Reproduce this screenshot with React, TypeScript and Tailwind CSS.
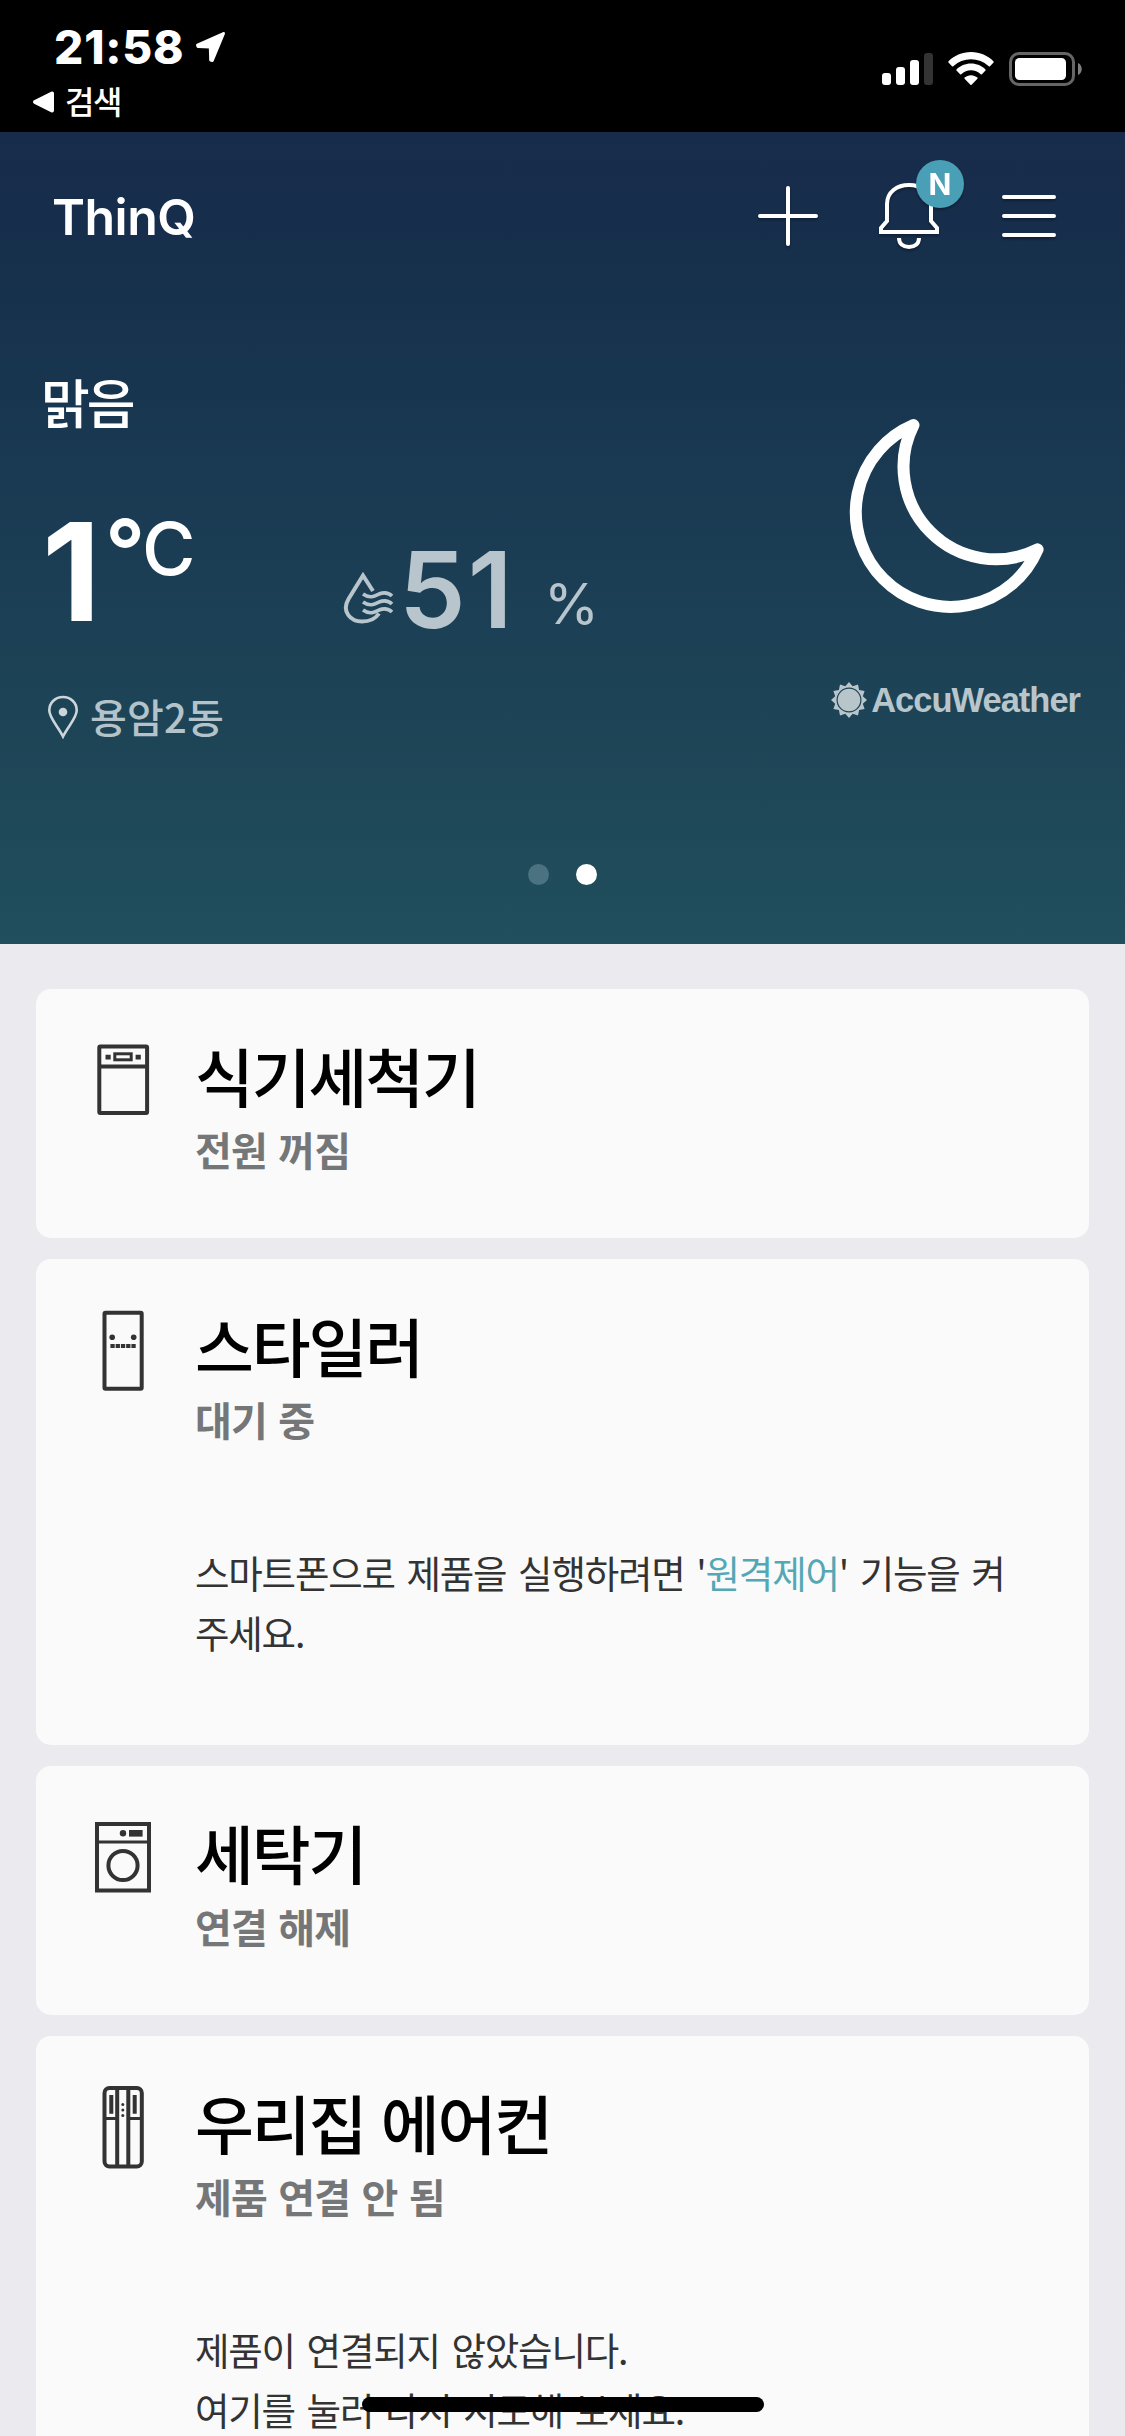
import type { ReactNode } from "react";

function StatusBar() {
  return (
    <div className="flex h-[132px] shrink-0 justify-between bg-black text-white">
      <div className="flex flex-col pl-8">
        <div className="mt-[20px] flex h-[54px] items-center pl-[22px]">
          <span className="w-[130px] font-[Inter] text-[46px] leading-[54px] font-extrabold tracking-[0.8px] whitespace-nowrap">21:58</span>
          <svg className="ml-[11px]" width="31" height="32" viewBox="0 0 31 32" fill="#fff" stroke="#fff" strokeWidth="3" strokeLinejoin="round">
            <path d="M28.5 2.5 L2.5 14 L3 15.5 L15.3 16 L15.7 29 L17.3 29.5 Z" />
          </svg>
        </div>
        <div className="mt-[7px] flex h-[42px] items-center">
          <svg width="23" height="24" viewBox="0 0 23 24" fill="#fff" stroke="#fff" strokeWidth="4" strokeLinejoin="round">
            <path d="M3 12 L20 3.5 V20.5 Z" />
          </svg>
          <span className="-mt-[4px] ml-[10px] text-[32px] leading-[42px] font-medium tracking-[-1.5px]">검색</span>
        </div>
      </div>
      <div className="mt-[50px] flex h-[38px] items-center pr-[42px]">
        <div className="flex h-8 items-end gap-[5px]">
          <i className="h-[12px] w-[9px] rounded-[3px] bg-white" />
          <i className="h-[18px] w-[9px] rounded-[3px] bg-white" />
          <i className="h-[25px] w-[9px] rounded-[3px] bg-white" />
          <i className="h-[32px] w-[9px] rounded-[3px] bg-[#333]" />
        </div>
        <svg className="ml-[15px]" width="46" height="34" viewBox="0 0 46 34" fill="#fff">
          <path d="M23 0 C32 0 40 3.6 45.6 9.4 Q46 10 45.5 10.6 L42 14.2 Q41.4 14.7 40.8 14.2 A26 26 0 0 0 5.200 14.200 Q4.600 14.700 4 14.200 L0.500 10.600 Q0 10 0.400 9.400 C6 3.600 14 0 23 0 Z" />
          <path d="M23 11.600 C28.700 11.600 33.800 13.900 37.500 17.500 Q38 18 37.500 18.600 L33.900 22.200 Q33.300 22.700 32.700 22.200 A14.200 14.200 0 0 0 13.300 22.200 Q12.700 22.700 12.100 22.200 L8.500 18.600 Q8 18 8.500 17.500 C12.200 13.900 17.300 11.600 23 11.600 Z" />
          <path d="M23 23.200 C25.500 23.200 27.700 24.100 29.400 25.600 Q30 26.200 29.400 26.800 L23.600 32.700 Q23 33.200 22.400 32.700 L16.600 26.800 Q16 26.200 16.600 25.600 C18.300 24.100 20.500 23.200 23 23.200 Z" />
        </svg>
        <svg className="ml-[15px]" width="74" height="34" viewBox="0 0 74 34">
          <rect x="1.500" y="1.500" width="63" height="31" rx="8.500" fill="none" stroke="#666" strokeWidth="3" />
          <rect x="6" y="6" width="51" height="22" rx="4.500" fill="#fff" />
          <path d="M69 11 C74 13 74 21 69 23 Z" fill="#7f7f7f" />
        </svg>
      </div>
    </div>
  );
}

function TopNav() {
  return (
    <div className="flex h-[168px] items-center pr-[69px] pl-[52px]">
      <h1 className="flex-1 pt-[2px] font-[Inter] text-[50px] leading-[60px] font-semibold tracking-[-0.5px]">ThinQ</h1>
      <div className="flex items-center drop-shadow-[0_2px_1px_rgba(0,0,0,0.3)]">
        <svg width="60" height="60" viewBox="0 0 60 60" stroke="#fff" strokeWidth="4" strokeLinecap="round">
          <path d="M2 30 H58 M30 2 V58" />
        </svg>
        <div className="relative ml-[61px] h-[66px] w-[60px]">
          <svg width="60" height="66" viewBox="0 0 60 66" fill="none" stroke="#fff" strokeWidth="4">
            <path d="M8 38 V21 C8 9 18 2 30 2 C42 2 52 9 52 21 V38 L58 45 V49 H2 V45 Z" />
            <path d="M20 55 C20 61 24.500 64 30 64 C35.500 64 40 61 40 55" />
          </svg>
          <span className="absolute -top-[23px] left-[37px] flex size-12 items-center justify-center rounded-full bg-[#499fb6] font-[Inter] text-[30px] leading-none font-bold">N</span>
        </div>
        <svg className="ml-[63px]" width="54" height="42" viewBox="0 0 54 42" stroke="#fff" strokeWidth="4" strokeLinecap="round">
          <path d="M2 2 H52 M2 21 H52 M2 40 H52" />
        </svg>
      </div>
    </div>
  );
}

function SunLogo() {
  const points = Array.from({ length: 24 }, (_, i) => {
    const r = i % 2 === 0 ? 18 : 14.3;
    const a = (i * Math.PI) / 12;
    return `${(18 + r * Math.sin(a)).toFixed(2)},${(18 - r * Math.cos(a)).toFixed(2)}`;
  }).join(" ");
  return (
    <svg width="36" height="36" viewBox="0 0 36 36">
      <polygon points={points} fill="#b8c6cc" />
      <circle cx="18" cy="18" r="11.900" fill="#b8c6cc" stroke="#1d4356" strokeWidth="1.200" />
    </svg>
  );
}

function Weather() {
  return (
    <div className="flex h-[500px]">
      <div className="flex w-[342px] flex-col pt-[71px] pl-[41px]">
        <div className="text-[53px] leading-[60px] font-medium tracking-[-3px]">맑음</div>
        <div className="mt-[73px] flex h-[136px] font-[Inter]">
          <span className="w-[64px] pl-px text-[136px] leading-[136px] font-bold">1</span>
          <span className="w-[37px] text-[88px] leading-[92px] font-semibold">°</span>
          <span className="text-[73px] leading-[90px] font-medium">C</span>
        </div>
        <div className="mt-[53px] flex h-12 items-center text-[#b4c3c9]">
          <svg className="ml-[6px]" width="32" height="44" viewBox="0 0 32 44" fill="none" stroke="#ccd6da" strokeWidth="2.600">
            <path d="M16 41.500 C11.500 32 2.300 23 2.300 15.500 C2.300 7.500 8.500 2 16 2 C23.500 2 29.700 7.500 29.700 15.500 C29.700 23 20.500 32 16 41.500 Z" />
            <circle cx="16" cy="17" r="4.300" fill="#ccd6da" stroke="none" />
          </svg>
          <span className="-mt-[3px] ml-[11px] text-[40px] leading-[48px] font-medium tracking-[0.2px]">용암2동</span>
        </div>
      </div>
      <div className="flex w-[400px] items-start pt-[238px] text-[#b8c5cc]">
        <svg className="mt-[34px]" width="52" height="53" viewBox="0 0 52 53" fill="none" stroke="#b8c5cc" strokeWidth="4">
          <path d="M31 19 L21 3.500 L6.500 27 C-1 40 9 49.500 20 49.500 C28 49.500 34 46 37 41.500" />
          <path strokeWidth="3.600" d="M21 22 C28 27 33 24 37 22 C42 20 46 20 50 24 M21 30 C28 35 33 32 37 30 C42 28 46 28 50 32 M21 38 C28 43 33 40 37 38 C42 36 46 36 50 40" />
        </svg>
        <span className="-mt-px ml-[5px] w-[144px] font-[Inter] text-[106px] leading-[105px] font-semibold tracking-[2px]">51</span>
        <span className="mt-[34px] ml-px font-[Inter] text-[56px] leading-[64px]">%</span>
      </div>
      <div className="flex flex-1 flex-col items-end pt-[116px] pr-[45px]">
        <svg className="mr-[33px]" width="200" height="200" viewBox="0 0 200 200" fill="none" stroke="#fff" strokeWidth="12" strokeLinejoin="round">
          <path d="M66.500 9 A94.700 94.700 0 1 0 190.600 133.400 A92.500 92.500 0 0 1 66.500 9 Z" />
        </svg>
        <div className="mt-[64px] flex h-10 items-center text-[#b8c6cc]">
          <SunLogo />
          <span className="ml-[4px] font-['Liberation_Sans'] text-[34.500px] leading-10 font-bold tracking-[-1px]">AccuWeather</span>
        </div>
      </div>
    </div>
  );
}

const ink = "#333";

const DishwasherIcon = () => (
  <svg width="90" height="90" viewBox="0 0 90 90" fill="none" stroke={ink} strokeWidth="4">
    <rect x="21.300" y="11.500" width="47.800" height="66.500" rx="1" />
    <path d="M21 31.500 H69" />
    <rect x="36.800" y="18.800" width="16.400" height="6" strokeWidth="3" />
    <path fill={ink} stroke="none" d="M27.500 19.800h5.200v4.600h-5.200z M57.600 19.800h5.200v4.600h-5.200z" />
  </svg>
);

const StylerIcon = () => (
  <svg width="90" height="90" viewBox="0 0 90 90" fill="none" stroke={ink} strokeWidth="4">
    <rect x="26.500" y="7.700" width="37.200" height="76" rx="1" />
    <g fill={ink} stroke="none">
      <circle cx="34.200" cy="32.300" r="2.800" />
      <circle cx="55.700" cy="32.300" r="2.800" />
    </g>
    <path d="M32.400 41.100 H57.800" strokeDasharray="4.300 0.950" />
  </svg>
);

const WasherIcon = () => (
  <svg width="90" height="90" viewBox="0 0 90 90" fill="none" stroke={ink} strokeWidth="4">
    <rect x="19" y="12" width="52" height="66.500" />
    <path d="M19 30 H71" strokeWidth="3" />
    <circle cx="45" cy="53.500" r="14.600" />
    <circle cx="45" cy="21.300" r="3.200" fill={ink} stroke="none" />
    <rect x="51" y="18" width="13.600" height="6.600" fill={ink} stroke="none" />
  </svg>
);

const AirconIcon = () => (
  <svg width="90" height="90" viewBox="0 0 90 90" fill="none" stroke={ink} strokeWidth="4">
    <rect x="26.500" y="6" width="37.300" height="78.500" rx="5" />
    <path d="M39.200 5 V84 M50.300 5 V84" />
    <path d="M26 36.500 H39 M50 36.500 H64" strokeWidth="3" />
    <path d="M33.300 13 V31.700 M56.700 13 V31.700" />
    <g fill={ink} stroke="none">
      <circle cx="44.800" cy="22.500" r="1.500" />
      <circle cx="44.800" cy="28" r="1.500" />
      <circle cx="44.800" cy="33.600" r="1.500" />
    </g>
  </svg>
);

function DeviceCard({ icon, name, status, children }: { icon: ReactNode; name: string; status: string; children?: ReactNode }) {
  return (
    <section className="flex rounded-[15px] bg-[#fafafa] pl-[42px]">
      <div className="mt-[46px] size-[90px] shrink-0">{icon}</div>
      <div className="ml-[27px] flex-1 pt-[43px]">
        <h2 className="text-[64px] leading-[84px] font-medium tracking-[-2.1px] text-black [word-spacing:3px]">{name}</h2>
        <p className="mt-[3px] text-[40px] leading-[60px] font-bold tracking-[-0.800px] text-[#747678] [word-spacing:3px]">{status}</p>
        {children ? (
          <p className="mt-[93px] pb-[83px] text-[37.500px] leading-[60px] tracking-[-1.200px] whitespace-nowrap text-[#333] [word-spacing:4.500px]">{children}</p>
        ) : (
          <div className="h-[59px]" />
        )}
      </div>
    </section>
  );
}

export default function App() {
  return (
    <div className="relative flex h-[2436px] w-[1125px] flex-col overflow-hidden bg-[#ebeaef] font-['Noto_Sans_CJK_KR',sans-serif]">
      <StatusBar />
      <header className="h-[812px] shrink-0 bg-[linear-gradient(180deg,#182b4b_0%,#162f4b_14%,#18354f_31%,#1b3d54_52%,#1e4657_78%,#204f5d_100%)] text-white">
        <TopNav />
        <Weather />
        <div className="mt-[64px] flex justify-center gap-[27px]">
          <span className="size-[21px] rounded-full bg-[#4a7280]" />
          <span className="size-[21px] rounded-full bg-white" />
        </div>
      </header>
      <main className="flex flex-col gap-[21px] px-[36px] pt-[45px]">
        <DeviceCard icon={<DishwasherIcon />} name="식기세척기" status="전원 꺼짐" />
        <DeviceCard icon={<StylerIcon />} name="스타일러" status="대기 중">
          스마트폰으로 제품을 실행하려면 '<span className="text-[#54a7b5]">원격제어</span>' 기능을 켜
          <br />
          주세요.
        </DeviceCard>
        <DeviceCard icon={<WasherIcon />} name="세탁기" status="연결 해제" />
        <DeviceCard icon={<AirconIcon />} name="우리집 에어컨" status="제품 연결 안 됨">
          제품이 연결되지 않았습니다.
          <br />
          여기를 눌러 다시 시도해 보세요.
        </DeviceCard>
      </main>
      <div className="absolute bottom-6 left-[362px] h-[15px] w-[402px] rounded-full bg-black" />
    </div>
  );
}
